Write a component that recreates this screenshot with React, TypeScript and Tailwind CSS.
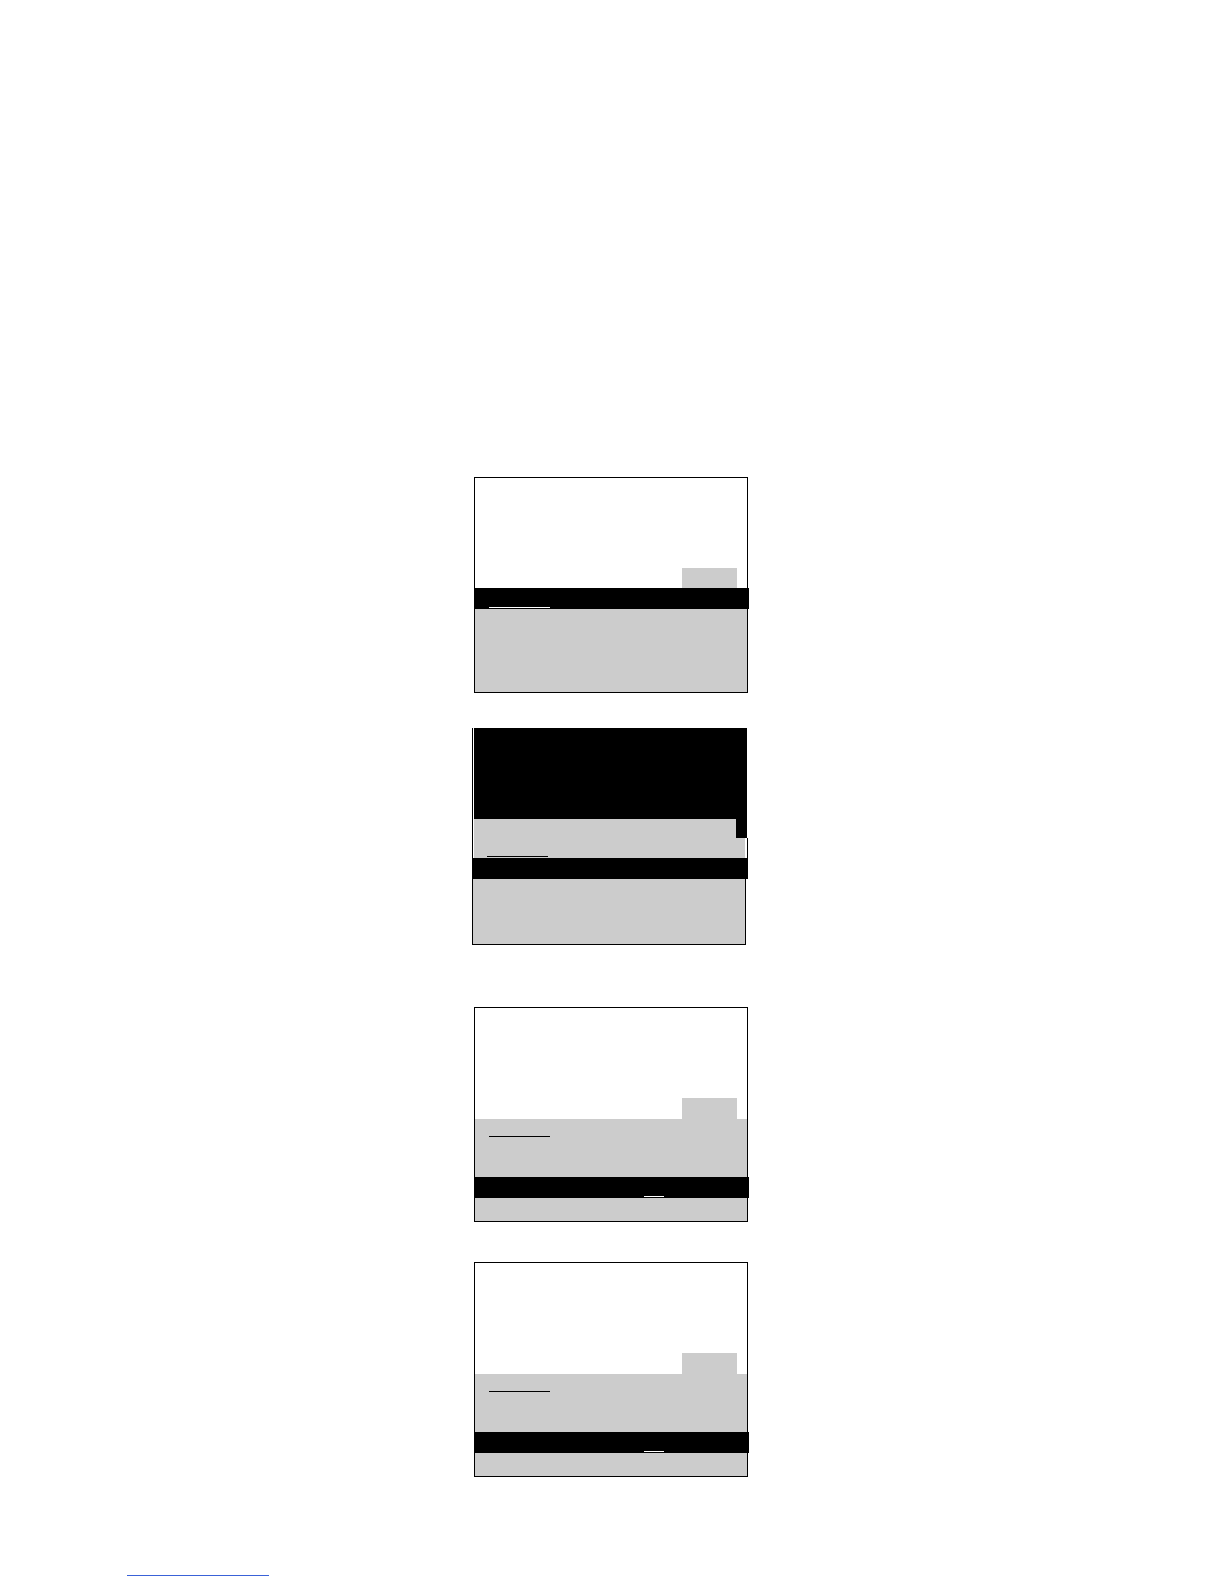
import React from "react";

function PanelA() {
  return (
    <div className="ml-[474px] w-[274px] border border-black flex flex-col">
      <div className="h-[110px] bg-white flex items-end justify-end pr-[10px]">
        <div className="w-[55px] h-[20px] bg-[#cccccc]" />
      </div>
      <div className="h-[21px] bg-black -mr-[2px] flex items-end pl-[14px] pb-[1px]">
        <div className="w-[61px] h-px bg-white" />
      </div>
      <div className="h-[83px] bg-[#cccccc]" />
    </div>
  );
}

function PanelB() {
  return (
    <div className="ml-[472px] w-[276px] flex flex-col">
      <div className="flex h-[91px]">
        <div className="w-px bg-black" />
        <div className="w-px bg-white" />
        <div className="w-[273px] bg-black" />
      </div>
      <div className="flex h-[19px]">
        <div className="w-px bg-black" />
        <div className="w-px bg-white" />
        <div className="w-[262px] bg-[#cccccc]" />
        <div className="w-[11px] bg-black" />
      </div>
      <div className="flex h-[20px]">
        <div className="w-px bg-black" />
        <div className="w-px bg-white" />
        <div className="w-[271px] bg-[#cccccc] flex items-end pl-[13px] pb-[1px]">
          <div className="w-[61px] h-px bg-black" />
        </div>
        <div className="w-[2px] bg-white" />
        <div className="w-px bg-black" />
      </div>
      <div className="h-[21px] w-[276px] bg-black" />
      <div className="flex h-[65px]">
        <div className="w-px bg-black" />
        <div className="w-[272px] bg-[#cccccc]" />
        <div className="w-px bg-black" />
      </div>
      <div className="h-px w-[274px] bg-black" />
    </div>
  );
}

function PanelC() {
  return (
    <div className="ml-[474px] w-[274px] border border-black flex flex-col">
      <div className="h-[111px] bg-white flex items-end justify-end pr-[10px]">
        <div className="w-[55px] h-[21px] bg-[#cccccc]" />
      </div>
      <div className="h-[58px] bg-[#cccccc] pt-[17px] pl-[14px]">
        <div className="w-[61px] h-px bg-black" />
      </div>
      <div className="h-[21px] bg-black -mr-[2px] flex items-end pl-[169px] pb-[1px]">
        <div className="w-[20px] h-px bg-white" />
      </div>
      <div className="h-[23px] bg-[#cccccc]" />
    </div>
  );
}

export default function App() {
  return (
    <div className="relative w-[1224px] h-[1584px] bg-white overflow-hidden">
      <div className="flex flex-col pt-[477px]">
        <PanelA />
        <div className="h-[35px]" />
        <PanelB />
        <div className="h-[62px]" />
        <PanelC />
        <div className="h-[40px]" />
        <PanelC />
        <div className="h-[98px]" />
        <div className="ml-[127px] w-[142px] h-px bg-[#3a62d8]" />
      </div>
    </div>
  );
}
